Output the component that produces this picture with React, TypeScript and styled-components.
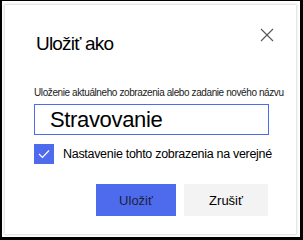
import React from "react";
import styled, { createGlobalStyle } from "styled-components";

const Global = createGlobalStyle`
  html, body { margin: 0; padding: 0; background: #fff; }
  body { font-family: "Liberation Sans", Arial, sans-serif; }
`;

const Frame = styled.div`
  box-sizing: border-box;
  width: 303px;
  height: 240px;
  border-style: solid;
  border-color: #000;
  border-width: 1px 3px 3px 2px;
  background: #fff;
  padding: 4px 4px 3px 3px;
`;

const Dialog = styled.div`
  box-sizing: border-box;
  width: 291px;
  height: 229px;
  background: #fff;
  box-shadow: 0 0 2px 1px rgba(0, 0, 0, 0.14);
  padding: 24px 0 0 29px;
  display: flex;
  flex-direction: column;
`;

const Header = styled.div`
  display: flex;
  justify-content: space-between;
  align-items: flex-start;
  padding-right: 22px;
`;

const Title = styled.h1`
  margin: 3px 0 0 2px;
  font-size: 19px;
  font-weight: 400;
  line-height: 24px;
  letter-spacing: -0.8px;
  color: #000;
`;

const Close = styled.button`
  border: 0;
  background: none;
  padding: 0;
  width: 14px;
  height: 14px;
  margin-top: -1px;
  display: flex;
`;

const Hint = styled.div`
  margin-top: 30px;
  font-size: 10px;
  line-height: 14px;
  color: #222;
  white-space: nowrap;
  letter-spacing: -0.4px;
`;

const Input = styled.div`
  box-sizing: border-box;
  margin-top: 4px;
  width: 235px;
  height: 31px;
  border: 1px solid #4f6bed;
  padding: 0 0 0 15px;
  display: flex;
  align-items: center;
  font-size: 22px;
  letter-spacing: -0.35px;
  color: #000;
`;

const CheckRow = styled.div`
  display: flex;
  align-items: center;
  gap: 9px;
  margin-top: 9px;
`;

const Box = styled.div`
  width: 20px;
  height: 20px;
  background: #4f6bed;
  display: flex;
  align-items: center;
  justify-content: center;
`;

const CheckLabel = styled.span`
  font-size: 12.5px;
  letter-spacing: -0.3px;
  color: #000;
`;

const Buttons = styled.div`
  display: flex;
  gap: 8px;
  margin-top: 20px;
  margin-left: 62px;
`;

const Button = styled.button<{ $primary?: boolean }>`
  box-sizing: border-box;
  border: 0;
  height: 32px;
  width: ${(p) => (p.$primary ? "80px" : "84px")};
  background: ${(p) => (p.$primary ? "#4f6bed" : "#f3f3f3")};
  color: ${(p) => (p.$primary ? "#1b1f3a" : "#000")};
  font-family: "Liberation Sans", Arial, sans-serif;
  font-size: 13px;
  padding: 0;
`;

export default function App() {
  return (
    <>
      <Global />
      <Frame>
        <Dialog>
          <Header>
            <Title>Uložiť ako</Title>
            <Close aria-label="Zavrieť">
              <svg width="14" height="14" viewBox="0 0 14 14">
                <path d="M1 1 L13 13 M13 1 L1 13" stroke="#555" strokeWidth="1.1" fill="none" />
              </svg>
            </Close>
          </Header>
          <Hint>Uloženie aktuálneho zobrazenia alebo zadanie nového názvu</Hint>
          <Input>Stravovanie</Input>
          <CheckRow>
            <Box>
              <svg width="12" height="10" viewBox="0 0 12 10">
                <path d="M1 5 L4.5 8.5 L11 1.5" stroke="#fff" strokeWidth="1.2" fill="none" />
              </svg>
            </Box>
            <CheckLabel>Nastavenie tohto zobrazenia na verejné</CheckLabel>
          </CheckRow>
          <Buttons>
            <Button $primary>Uložiť</Button>
            <Button>Zrušiť</Button>
          </Buttons>
        </Dialog>
      </Frame>
    </>
  );
}
